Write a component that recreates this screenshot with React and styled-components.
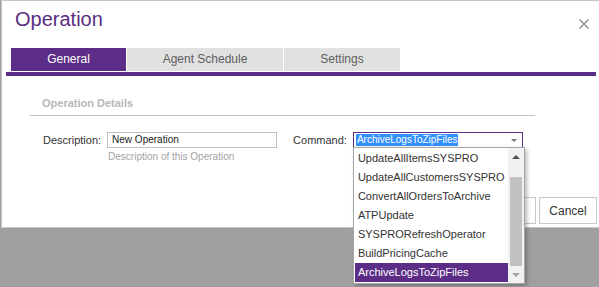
import React from 'react';
import styled, { createGlobalStyle } from 'styled-components';

const Global = createGlobalStyle`
    html, body {
        margin: 0;
        padding: 0;
        background: #a0a0a0;
        overflow: hidden;
        font-family: "Liberation Sans", Arial, sans-serif;
    }
`

const Page = styled.div`
    width: 599px;
    height: 287px;
    overflow: hidden;
`

const Dialog = styled.div`
    box-sizing: border-box;
    margin-left: 1px;
    width: 600px;
    height: 228px;
    background: #fff;
    border: 1px solid #c6c6c6;
    display: flex;
    flex-direction: column;
`

const Header = styled.div`
    height: 47px;
    display: flex;
    justify-content: space-between;
    align-items: flex-start;
    padding: 6px 11px 0 13px;
    box-sizing: border-box;
`

const Title = styled.h1`
    margin: 0;
    font-size: 20px;
    line-height: 24px;
    font-weight: normal;
    color: #5a2d82;
`

const Close = styled.button`
    border: 0;
    background: none;
    padding: 0;
    margin-top: 10px;
    width: 10px;
    height: 10px;
    display: block;
    cursor: pointer;
`

const TabBar = styled.div`
    display: flex;
    gap: 1px;
    margin: 0 4px;
    padding: 0 0 1px 5px;
    border-bottom: 4px solid #5c2d86;
`

const Tab = styled.div`
    width: ${p => p.w}px;
    height: 23px;
    line-height: 23px;
    text-align: center;
    font-size: 12px;
    background: ${p => p.active ? '#5c2d86' : '#e1e1e1'};
    color: ${p => p.active ? '#fff' : '#5e5e5e'};
`

const Section = styled.div`
    margin: 20px 0 0 28px;
    width: 505px;
`

const Legend = styled.div`
    padding: 0 0 4px 12px;
    line-height: 15px;
    font-size: 11px;
    font-weight: bold;
    color: #b8b8b8;
    border-bottom: 1px solid #c4c4c4;
`

const FormRow = styled.div`
    display: flex;
    gap: 16px;
    margin-top: 16px;
    padding-left: 13px;
`

const Field = styled.div`
    display: flex;
    align-items: flex-start;
    gap: 6px;
`

const Label = styled.label`
    font-size: 11px;
    line-height: 16px;
    color: #333;
`

const Control = styled.div`
    display: flex;
    flex-direction: column;
    position: relative;
`

const Input = styled.div`
    box-sizing: border-box;
    width: 170px;
    height: 16px;
    border: 1px solid #c2c2c2;
    font-size: 10px;
    line-height: 14px;
    padding-left: 4px;
    color: #222;
`

const Help = styled.div`
    font-size: 10px;
    color: #a3a3a3;
    margin: 3px 0 0 1px;
    line-height: 12px;
`

const Select = styled.div`
    box-sizing: border-box;
    width: 170px;
    height: 16px;
    border: 1px solid #5c2d86;
    padding: 1px 0 0 2px;
    display: flex;
    justify-content: space-between;
    align-items: flex-start;
`

const Picked = styled.span`
    background: #3390ff;
    color: #fff;
    font-size: 10px;
    line-height: 12px;
    padding: 0 1px;
`

const Caret = styled.span`
    margin: 5px 5px 0 0;
    width: 0;
    height: 0;
    border-left: 3px solid transparent;
    border-right: 3px solid transparent;
    border-top: 3px solid #777;
`

const List = styled.div`
    position: absolute;
    top: 15px;
    left: 0;
    width: 172px;
    box-sizing: border-box;
    height: 137px;
    border: 1px solid #a7a7a7;
    background: #fff;
    box-shadow: 2px 2px 4px rgba(0, 0, 0, 0.28);
    display: flex;
    z-index: 5;
`

const Items = styled.div`
    flex: 1;
    padding: 1px 0 1px 1px;
`

const Item = styled.div`
    height: 19px;
    line-height: 19px;
    font-size: 11px;
    padding-left: 3px;
    white-space: nowrap;
    color: ${p => p.active ? '#fff' : '#333'};
    background: ${p => p.active ? '#5c2d86' : 'transparent'};
`

const Scroll = styled.div`
    width: 16px;
    background: #f1f1f1;
    display: flex;
    flex-direction: column;
    align-items: center;
`

const Arrow = styled.div`
    height: 17px;
    display: flex;
    align-items: center;
    justify-content: center;

    &::before {
        content: '';
        border-left: 4px solid transparent;
        border-right: 4px solid transparent;
        ${p => p.up ? 'border-bottom: 4px solid #505050;' : 'border-top: 4px solid #a3a3a3;'}
    }
`

const Thumb = styled.div`
    width: 12px;
    height: 89px;
    margin-top: 12px;
    background: #c1c1c1;
`

const Footer = styled.div`
    margin-top: auto;
    display: flex;
    justify-content: flex-end;
    gap: 3px;
    padding: 0 3px 3px 0;
`

const Button = styled.button`
    box-sizing: border-box;
    height: 27px;
    width: ${p => p.w}px;
    background: #fff;
    border: 1px solid #c8c8c8;
    font-family: "Liberation Sans", Arial, sans-serif;
    font-size: 12px;
    color: #333;
    padding: 0;
`

const commands = [
    'UpdateAllItemsSYSPRO',
    'UpdateAllCustomersSYSPRO',
    'ConvertAllOrdersToArchive',
    'ATPUpdate',
    'SYSPRORefreshOperator',
    'BuildPricingCache',
    'ArchiveLogsToZipFiles',
]

const App = () => {
    return (
        <Page>
            <Global />
            <Dialog>
                <Header>
                    <Title>Operation</Title>
                    <Close aria-label="close">
                        <svg width="10" height="10" viewBox="0 0 10 10">
                            <path d="M0.5 0.5 L9.5 9.5 M9.5 0.5 L0.5 9.5" stroke="#8a8a8a" strokeWidth="1.2" fill="none" />
                        </svg>
                    </Close>
                </Header>
                <TabBar>
                    <Tab w={115} active>General</Tab>
                    <Tab w={156}>Agent Schedule</Tab>
                    <Tab w={116}>Settings</Tab>
                </TabBar>
                <Section>
                    <Legend>Operation Details</Legend>
                    <FormRow>
                        <Field>
                            <Label>Description:</Label>
                            <Control>
                                <Input>New Operation</Input>
                                <Help>Description of this Operation</Help>
                            </Control>
                        </Field>
                        <Field>
                            <Label>Command:</Label>
                            <Control>
                                <Select>
                                    <Picked>ArchiveLogsToZipFiles</Picked>
                                    <Caret />
                                </Select>
                                <List>
                                    <Items>
                                        {commands.map(c => (
                                            <Item key={c} active={c === 'ArchiveLogsToZipFiles'}>{c}</Item>
                                        ))}
                                    </Items>
                                    <Scroll>
                                        <Arrow up />
                                        <Thumb />
                                        <Arrow />
                                    </Scroll>
                                </List>
                            </Control>
                        </Field>
                    </FormRow>
                </Section>
                <Footer>
                    <Button w={50}>OK</Button>
                    <Button w={58}>Cancel</Button>
                </Footer>
            </Dialog>
        </Page>
    )
}

export default App;
